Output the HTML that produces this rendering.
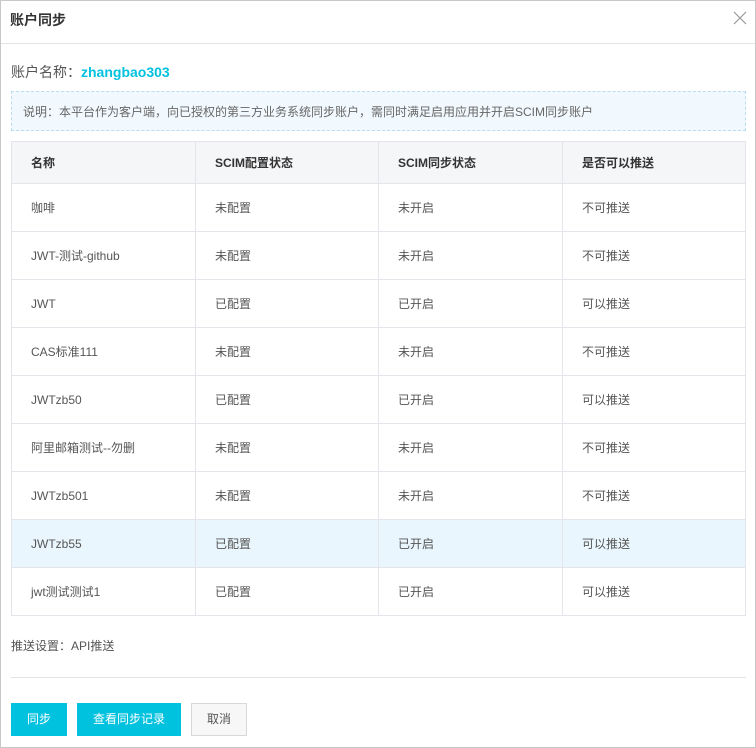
<!DOCTYPE html>
<html><head><meta charset="utf-8"><style>
*{margin:0;padding:0;box-sizing:border-box}
body{width:756px;height:748px;background:#fff;font-family:"Liberation Sans","Noto Sans CJK SC",sans-serif;font-size:12px;color:#555;position:relative;overflow:hidden}
.frame{position:absolute;left:0;top:0;width:756px;height:748px;border:1px solid #c8c8c8}
.title{position:absolute;left:10px;top:10px;font-size:14px;color:#333;font-weight:bold}
.close{position:absolute;left:733px;top:11px}
.hd{position:absolute;left:1px;right:1px;top:43px;border-top:1px solid #e3e3e3}
.acct{position:absolute;left:11px;top:62px;font-size:14px;color:#555}
.acct b{color:#00c1de}
.note{position:absolute;left:11px;top:91px;width:735px;height:40px;border:1px dashed #b8dcf0;background:#f1f9fe;padding:11px 11px;font-size:12px;color:#666}
table{position:absolute;left:11px;top:141px;width:735px;border-collapse:collapse}
td,th{border:1px solid #e3e5ea;height:48px;padding:0 0 0 19px;text-align:left;font-size:12px;color:#555;font-weight:normal}
th{height:42px;background:#f5f6f8;font-weight:bold;color:#333}
tr.hl td{background:#eaf6fd}
.push{position:absolute;left:11px;top:637px;color:#555}
.line{position:absolute;left:11px;width:735px;top:677px;border-top:1px solid #e3e3e3}
.btn{position:absolute;top:703px;height:33px;line-height:33px;text-align:center;font-size:12px}
.p{background:#00c1de;color:#fff}
.g{background:#f7f7f7;border:1px solid #d8d8d8;color:#555;line-height:31px}
</style></head><body>
<div class="frame"></div>
<div class="title">账户同步</div>
<svg class="close" width="14" height="14" viewBox="0 0 14 14"><path d="M1 1L13 13M13 1L1 13" stroke="#999" stroke-width="1.2"/></svg>
<div class="hd"></div>
<div class="acct">账户名称：<b>zhangbao303</b></div>
<div class="note">说明：本平台作为客户端，向已授权的第三方业务系统同步账户，需同时满足启用应用并开启SCIM同步账户</div>
<table>
<tr><th style="width:184px">名称</th><th style="width:183px">SCIM配置状态</th><th style="width:184px">SCIM同步状态</th><th>是否可以推送</th></tr>
<tr><td>咖啡</td><td>未配置</td><td>未开启</td><td>不可推送</td></tr>
<tr><td>JWT-测试-github</td><td>未配置</td><td>未开启</td><td>不可推送</td></tr>
<tr><td>JWT</td><td>已配置</td><td>已开启</td><td>可以推送</td></tr>
<tr><td>CAS标准111</td><td>未配置</td><td>未开启</td><td>不可推送</td></tr>
<tr><td>JWTzb50</td><td>已配置</td><td>已开启</td><td>可以推送</td></tr>
<tr><td>阿里邮箱测试--勿删</td><td>未配置</td><td>未开启</td><td>不可推送</td></tr>
<tr><td>JWTzb501</td><td>未配置</td><td>未开启</td><td>不可推送</td></tr>
<tr class="hl"><td>JWTzb55</td><td>已配置</td><td>已开启</td><td>可以推送</td></tr>
<tr><td>jwt测试测试1</td><td>已配置</td><td>已开启</td><td>可以推送</td></tr>
</table>
<div class="push">推送设置：API推送</div>
<div class="line"></div>
<div class="btn p" style="left:11px;width:56px">同步</div>
<div class="btn p" style="left:77px;width:104px">查看同步记录</div>
<div class="btn g" style="left:191px;width:56px">取消</div>
</body></html>
